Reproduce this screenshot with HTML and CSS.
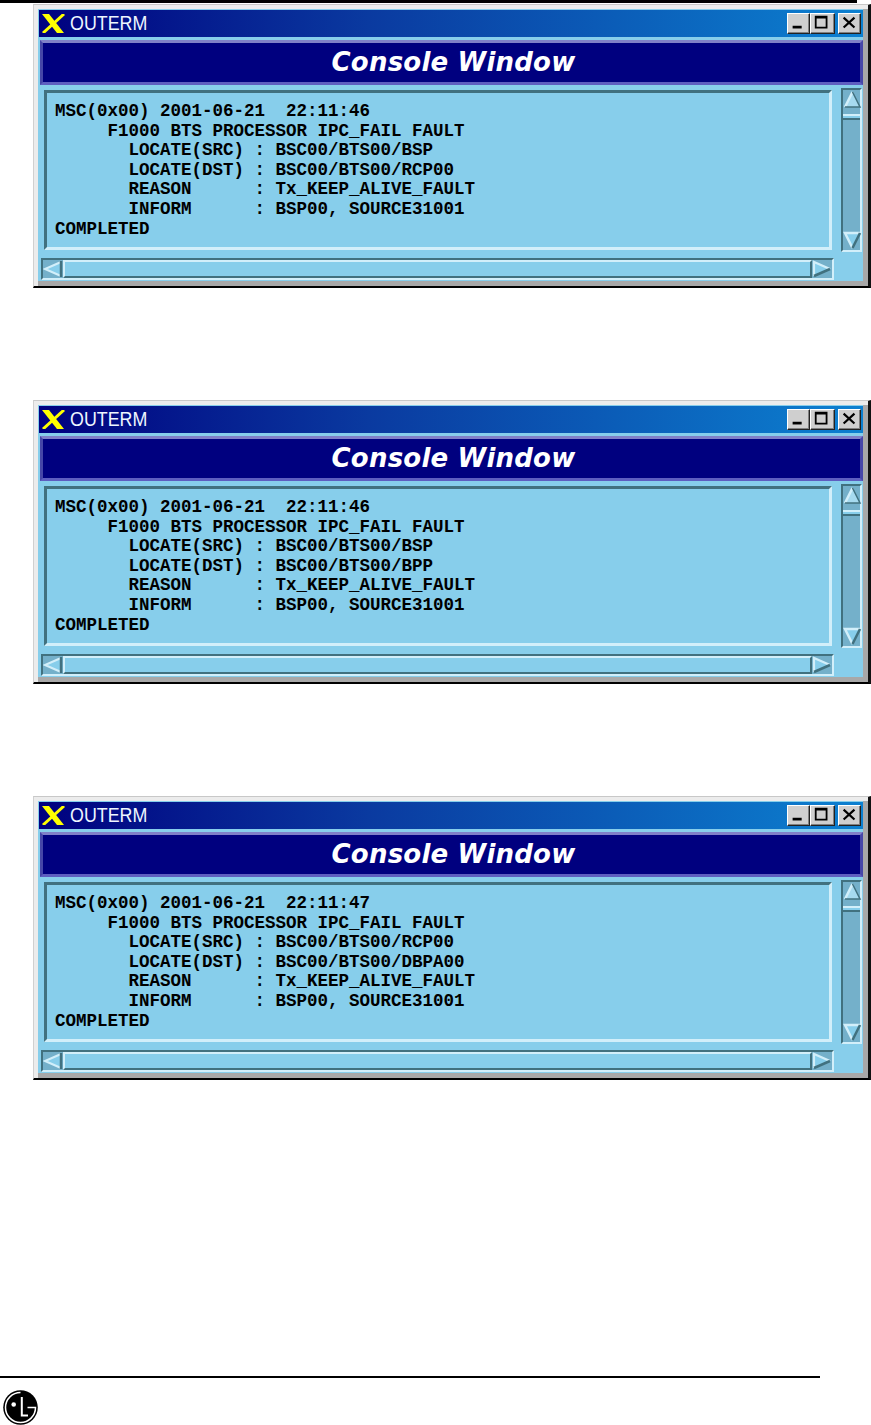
FILE: index.html
```html
<!DOCTYPE html>
<html lang="en">
<head>
<meta charset="utf-8">
<title>OUTERM Console Window</title>
<link rel="stylesheet" href="styles.css">
</head>
<body>
<svg class="defs" aria-hidden="true">
  <symbol id="x" viewBox="0 0 24 19"><path d="M1 0h7l15 19h-7z" fill="#ffff00"/><path d="M23 0L2 19" stroke="#ffff00" stroke-width="3"/></symbol>
  <symbol id="min" viewBox="0 0 23 21"><rect x="5" y="13" width="10" height="3" fill="#000"/></symbol>
  <symbol id="max" viewBox="0 0 25 21"><path d="M4 2h14v14H4z M6 5v9h10V5z" fill="#000" fill-rule="evenodd"/></symbol>
  <symbol id="close" viewBox="0 0 23 21"><path d="M5 4l12 11M17 4L5 15" stroke="#000" stroke-width="2.4"/></symbol>
  <symbol id="up" viewBox="0 0 19 20"><path d="M9.500 2L2 17h15z" fill="#a6daef"/><path d="M2 17L9.500 2" stroke="#d2effa" stroke-width="2.500"/><path d="M2 17h15L9.500 2" stroke="#41717f" stroke-width="1.500" fill="none"/></symbol>
  <symbol id="down" viewBox="0 0 19 20"><path d="M9.500 18L2 3h15z" fill="#87ceeb"/><path d="M9.500 18L2 3h15" stroke="#d2effa" stroke-width="2.500" fill="none"/><path d="M9.500 18L17 3" stroke="#41717f" stroke-width="2.500"/></symbol>
  <symbol id="left" viewBox="0 0 20 16"><path d="M2 8L18 1v14z" fill="#87ceeb"/><path d="M18 1L2 8l16 7" stroke="#d2effa" stroke-width="2.200" fill="none"/><path d="M18 0v16" stroke="#41717f" stroke-width="2.500"/></symbol>
  <symbol id="right" viewBox="0 0 20 16"><path d="M18 8L2 1v14z" fill="#87ceeb"/><path d="M2 15V1l16 7" stroke="#d2effa" stroke-width="2.200" fill="none"/><path d="M2 15l16-7" stroke="#41717f" stroke-width="2.500"/></symbol>
</svg>
<div class="top-rule"></div>
<main class="windows">

<section class="window">
  <header class="titlebar">
    <svg class="x-logo"><use href="#x"/></svg>
    <span class="title">OUTERM</span>
    <div class="controls">
      <span class="btn"><svg><use href="#min"/></svg></span>
      <span class="btn btn-max"><svg><use href="#max"/></svg></span>
      <span class="btn btn-close"><svg><use href="#close"/></svg></span>
    </div>
  </header>
  <div class="band"><h1>Console Window</h1></div>
  <div class="body">
    <pre class="panel">MSC(0x00) 2001-06-21  22:11:46
     F1000 BTS PROCESSOR IPC_FAIL FAULT
       LOCATE(SRC) : BSC00/BTS00/BSP
       LOCATE(DST) : BSC00/BTS00/RCP00
       REASON      : Tx_KEEP_ALIVE_FAULT
       INFORM      : BSP00, SOURCE31001
COMPLETED</pre>
    <div class="vscroll">
      <svg class="arrow"><use href="#up"/></svg>
      <span class="vthumb"></span>
      <svg class="arrow arrow-end"><use href="#down"/></svg>
    </div>
    <div class="hscroll">
      <svg class="harrow"><use href="#left"/></svg>
      <span class="hthumb"></span>
      <svg class="harrow"><use href="#right"/></svg>
    </div>
  </div>
</section>

<section class="window">
  <header class="titlebar">
    <svg class="x-logo"><use href="#x"/></svg>
    <span class="title">OUTERM</span>
    <div class="controls">
      <span class="btn"><svg><use href="#min"/></svg></span>
      <span class="btn btn-max"><svg><use href="#max"/></svg></span>
      <span class="btn btn-close"><svg><use href="#close"/></svg></span>
    </div>
  </header>
  <div class="band"><h1>Console Window</h1></div>
  <div class="body">
    <pre class="panel">MSC(0x00) 2001-06-21  22:11:46
     F1000 BTS PROCESSOR IPC_FAIL FAULT
       LOCATE(SRC) : BSC00/BTS00/BSP
       LOCATE(DST) : BSC00/BTS00/BPP
       REASON      : Tx_KEEP_ALIVE_FAULT
       INFORM      : BSP00, SOURCE31001
COMPLETED</pre>
    <div class="vscroll">
      <svg class="arrow"><use href="#up"/></svg>
      <span class="vthumb"></span>
      <svg class="arrow arrow-end"><use href="#down"/></svg>
    </div>
    <div class="hscroll">
      <svg class="harrow"><use href="#left"/></svg>
      <span class="hthumb"></span>
      <svg class="harrow"><use href="#right"/></svg>
    </div>
  </div>
</section>

<section class="window">
  <header class="titlebar">
    <svg class="x-logo"><use href="#x"/></svg>
    <span class="title">OUTERM</span>
    <div class="controls">
      <span class="btn"><svg><use href="#min"/></svg></span>
      <span class="btn btn-max"><svg><use href="#max"/></svg></span>
      <span class="btn btn-close"><svg><use href="#close"/></svg></span>
    </div>
  </header>
  <div class="band"><h1>Console Window</h1></div>
  <div class="body">
    <pre class="panel">MSC(0x00) 2001-06-21  22:11:47
     F1000 BTS PROCESSOR IPC_FAIL FAULT
       LOCATE(SRC) : BSC00/BTS00/RCP00
       LOCATE(DST) : BSC00/BTS00/DBPA00
       REASON      : Tx_KEEP_ALIVE_FAULT
       INFORM      : BSP00, SOURCE31001
COMPLETED</pre>
    <div class="vscroll">
      <svg class="arrow"><use href="#up"/></svg>
      <span class="vthumb"></span>
      <svg class="arrow arrow-end"><use href="#down"/></svg>
    </div>
    <div class="hscroll">
      <svg class="harrow"><use href="#left"/></svg>
      <span class="hthumb"></span>
      <svg class="harrow"><use href="#right"/></svg>
    </div>
  </div>
</section>

</main>
<footer class="footer">
  <div class="bottom-rule"></div>
  <svg class="lg-logo" viewBox="0 0 35 35">
    <circle cx="17.500" cy="17.500" r="17.300" fill="#000"/>
    <path d="M17.500 2.500A15 15 0 1 0 32.500 17.500H24.500" stroke="#fff" stroke-width="1.500" fill="none"/>
    <circle cx="10.700" cy="14.500" r="2.300" fill="#fff"/>
    <path d="M18.800 7V25.500H25" stroke="#fff" stroke-width="2" fill="none"/>
  </svg>
</footer>
</body>
</html>
```
FILE: styles.css
```css
html, body { margin: 0; padding: 0; background: #fff; }
body { width: 871px; height: 1425px; overflow: hidden; }
.defs { display: none; }
.top-rule { width: 857px; height: 3px; background: #000; }
.windows { display: flex; flex-direction: column; gap: 112px; margin: 1px 0 0 33px; }
.window {
  box-sizing: border-box; width: 838px; height: 284px; display: flex; flex-direction: column;
  background: #87ceeb; padding: 5px 5px 6px 5px;
  border-top: 1px solid #c8c8c8; border-left: 1px solid #d0d0d0;
  border-right: 3px solid #111; border-bottom: 2px solid #000;
  box-shadow: inset 4px 4px 0 #ececec, inset -5px -5px 0 #a8a8a8;
}
.titlebar {
  flex: none; height: 27px; display: flex; align-items: center; padding-right: 2px;
  background: linear-gradient(90deg, #00007f 0%, #0a3aa0 40%, #0c80d0 100%);
}
.x-logo { width: 24px; height: 19px; flex: none; margin-left: 2px; }
.title {
  font: 21px/27px "Liberation Sans", sans-serif; color: #eef6ff; margin: -3px 0 0 5px;
  transform: scaleX(.85); transform-origin: left;
}
.controls { margin-left: auto; display: flex; align-items: center; }
.btn {
  box-sizing: border-box; width: 23px; height: 21px; background: #cfcfcf; display: block;
  border-top: 1px solid #fff; border-left: 1px solid #fff; border-right: 1px solid #222; border-bottom: 1px solid #222;
  box-shadow: inset -1px -1px 0 #808080;
}
.btn svg { display: block; width: 100%; height: 100%; }
.btn-max { width: 25px; }
.btn-close { margin-left: 3px; }
.band {
  flex: none; box-sizing: border-box; height: 45px; margin: 3px 0 0 1px; display: flex; align-items: center; justify-content: center;
  background: #00007f; border: 3px solid #4646a8; border-top-color: #8080c8; border-bottom-color: #5e5ec0;
}
.band h1 { margin: -2px 0 0 4px; font: italic bold 26px/1 "DejaVu Sans", sans-serif; letter-spacing: .2px; color: #fff; }
.body {
  flex: 1; display: grid; grid-template-columns: 1fr 21px; grid-template-rows: 160px 22px; gap: 8px 9px;
  padding: 5px 1px 0 5px; align-content: start;
}
.panel {
  margin: 0; box-sizing: border-box; min-width: 0; padding: 9px 0 0 8px;
  font: bold 17.5px/19.6px "Liberation Mono", monospace; color: #000; overflow: hidden;
  background: #87ceeb; border: 3px solid #41717f; border-right-color: #d2effa; border-bottom-color: #d2effa;
}
.vscroll {
  box-sizing: border-box; display: flex; flex-direction: column; align-items: stretch; background: #74b0ca;
  margin: -2px 0;
  border: 2px solid #41717f; border-right-color: #d2effa; border-bottom-color: #d2effa;
}
.arrow { width: 19px; height: 20px; flex: none; display: block; }
.arrow-end { margin-top: auto; }
.vthumb { display: block; height: 2px; margin-top: 4px; background: #87ceeb; border-top: 2px solid #d2effa; border-bottom: 2px solid #41717f; }
.hscroll {
  grid-column: 1; box-sizing: border-box; display: flex; align-items: stretch; background: #74b0ca;
  margin: 0 -2px 0 -3px;
  border: 2px solid #41717f; border-right-color: #d2effa; border-bottom-color: #d2effa;
}
.harrow { width: 20px; flex: none; display: block; height: 18px; }
.hthumb { flex: 1; background: #87ceeb; border: 2px solid #d2effa; border-right-color: #41717f; border-bottom-color: #41717f; }
.footer { margin-top: 296px; }
.bottom-rule { width: 820px; height: 2px; background: #000; }
.lg-logo { display: block; width: 35px; height: 35px; margin: 12px 0 0 3px; }
```
